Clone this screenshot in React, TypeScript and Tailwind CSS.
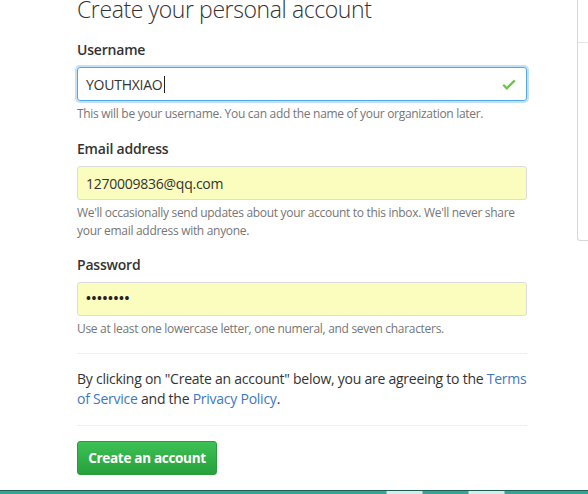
import React from 'react';

const font = "font-['Open_Sans','Noto_Sans',sans-serif]";

function Hint({ children }: { children: React.ReactNode }) {
  return <p className="mt-[4px] text-[12px] leading-[18px] tracking-[-0.3px] text-[#767676]">{children}</p>;
}

function Label({ children }: { children: React.ReactNode }) {
  return <label className="block mb-[7px] text-[14px] leading-[20px] font-semibold tracking-[-0.2px] text-[#333]">{children}</label>;
}

export default function App() {
  return (
    <div className={`${font} h-[494px] w-[588px] overflow-hidden bg-white flex flex-col`}>
      <div className="flex flex-1">
        {/* Signup form */}
        <div className="ml-[77px] w-[450px]">
          <h1 className="-mt-[6px] mb-[16px] text-[23px] leading-[30px] font-light tracking-[-0.4px] text-[#333]">Create your personal account</h1>

          <div>
            <Label>Username</Label>
            <div className="relative h-[34px] rounded-[3px] border border-[#51a7e8] shadow-[0_0_0_2px_rgba(81,167,232,0.35)] flex items-center px-[8px]">
              <span className="text-[14px] tracking-[-0.25px] text-[#333]">YOUTHXIAO</span>
              <span className="ml-[2px] h-[17px] w-px bg-[#222]" />
              <svg className="absolute right-[10px] top-[11px]" width="14" height="11" viewBox="0 3 12 10">
                <path d="M12 5l-8 8-4-4 1.5-1.5L4 10l6.5-6.5L12 5z" fill="#6cc644" />
              </svg>
            </div>
            <Hint>This will be your username. You can add the name of your organization later.</Hint>
          </div>

          <div className="mt-[16px]">
            <Label>Email address</Label>
            <div className="h-[34px] rounded-[3px] border border-[#ddd] bg-[#fafdbd] flex items-center px-[8px] text-[14px] tracking-[-0.25px] text-[#333]">
              1270009836@qq.com
            </div>
            <Hint>We'll occasionally send updates about your account to this inbox. We'll never share your email address with anyone.</Hint>
          </div>

          <div className="mt-[15px]">
            <Label>Password</Label>
            <div className="h-[34px] rounded-[3px] border border-[#ddd] bg-[#fafdbd] flex items-center px-[8px] text-[13px] font-bold tracking-[0.6px] text-[#222]">
              ••••••••
            </div>
            <Hint>Use at least one lowercase letter, one numeral, and seven characters.</Hint>
          </div>

          <div className="mt-[15px] border-t border-[#eee]" />
          <p className="mt-[15px] text-[14px] leading-[20px] tracking-[-0.25px] text-[#333]">
            By clicking on "Create an account" below, you are agreeing to the <a className="text-[#4078c0]">Terms of Service</a> and the{' '}
            <a className="text-[#4078c0]">Privacy Policy</a>.
          </p>
          <div className="mt-[16px] border-t border-[#eee]" />

          <button className="mt-[15px] h-[34px] w-[140px] rounded-[3px] border border-[#2a9c3f] bg-gradient-to-b from-[#3cc155] to-[#27a13c] text-[13.5px] font-bold tracking-[-0.3px] text-white">
            Create an account
          </button>
        </div>

        {/* Side panel edge */}
        <div className="ml-[50px] flex-1">
          <div className="h-[241px] rounded-bl-[3px] border-l border-b border-[#d8d8d8]">
            <div className="h-[43px] border-b border-[#e5e5e5]" />
          </div>
        </div>
      </div>

      {/* Taskbar strip */}
      <div className="h-[4px] flex border-t border-[#1d5e57] bg-[#37a394]">
        <div className="w-[386px]" />
        <div className="w-[37px] bg-[#d6ece8] border-x border-[#8fc2ba]" />
        <div className="w-[45px]" />
        <div className="w-[37px] bg-[#d6ece8] border-x border-[#8fc2ba]" />
        <div className="flex-1" />
      </div>
    </div>
  );
}
